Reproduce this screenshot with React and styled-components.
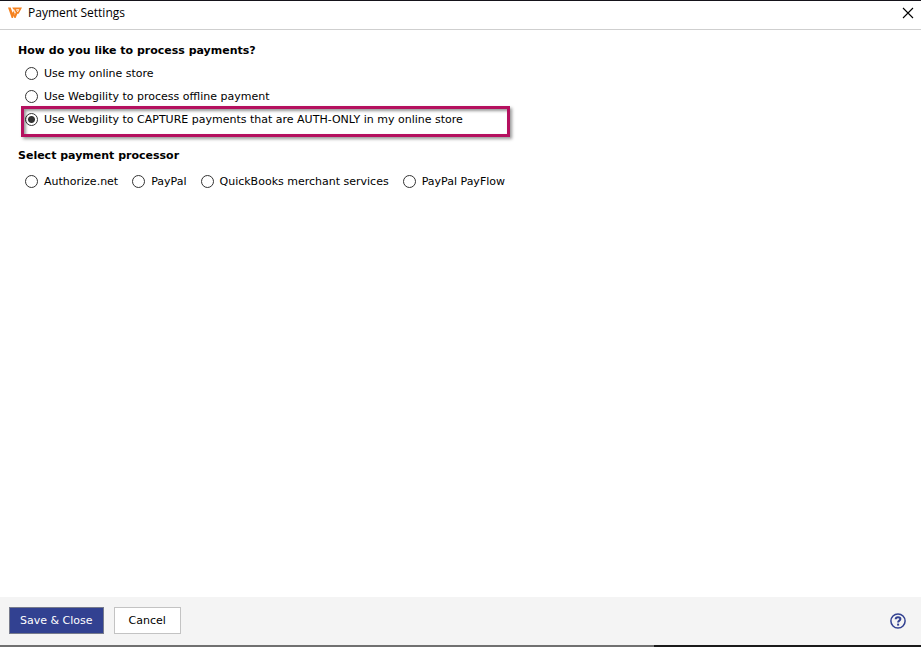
import React, { useState } from 'react'
import styled, { createGlobalStyle } from 'styled-components'

const GlobalStyle = createGlobalStyle`
* {
  box-sizing: border-box;
}
body {
  margin: 0;
  background-color: #fff;
}
`

const Window = styled.div`
  display: flex;
  flex-direction: column;
  min-height: 100vh;
  padding-bottom: 5px;
  border-top: 1px solid #15131a;
  background-color: #fff;
  color: #000;
  font-family: Verdana, 'DejaVu Sans', sans-serif;
  font-size: 11px;
  line-height: 15px;
`

const TitleBar = styled.header`
  display: flex;
  align-items: center;
  height: 29px;
  padding: 0 7px 4px 8px;
  border-bottom: 1px solid #cfcfcf;
`

const Title = styled.h1`
  flex: 1;
  margin: 0 0 0 6px;
  font-family: 'Segoe UI', 'Open Sans', sans-serif;
  font-size: 12px;
  font-weight: 400;
  line-height: 18px;
`

const IconButton = styled.button`
  display: flex;
  padding: 0;
  border: none;
  background-color: transparent;
  color: ${(props) => props.$color || '#000'};
`

const Content = styled.main`
  flex: 1;
  padding: 13px 18px;
`

const Group = styled.fieldset`
  min-width: 0;
  margin: 0 0 17px;
  padding: 0;
  border: none;
`

const Legend = styled.legend`
  padding: 0;
  font-weight: 700;
`

const Options = styled.div`
  display: flex;
  flex-direction: ${(props) => (props.$inline ? 'row' : 'column')};
  flex-wrap: ${(props) => (props.$inline ? 'wrap' : 'nowrap')};
  align-items: flex-start;
  column-gap: 14px;
  padding: ${(props) => (props.$inline ? '7px 0 0 7px' : '4px 0 0 3px')};
`

const Option = styled.label`
  display: flex;
  align-items: center;
  gap: 6px;
  height: 23px;
  padding-left: ${(props) => (props.$inline ? '0' : '4px')};
`

/* the frame is drawn over the row, so it takes no room in the list */
const HighlightedOption = styled(Option)`
  position: relative;
  width: 489px;
  max-width: 100%;

  &::after {
    content: '';
    position: absolute;
    inset: -2px 0 -6px;
    border: 3px solid #b5105f;
    box-shadow: 2px 2px 3px rgba(0, 0, 0, 0.4), inset 2px 2px 3px rgba(0, 0, 0, 0.4);
    pointer-events: none;
  }
`

const Radio = styled.input`
  appearance: none;
  flex: none;
  width: 13px;
  height: 13px;
  margin: 0;
  border: 1px solid #333;
  border-radius: 50%;
  background-color: #fff;

  &:checked {
    background-image: radial-gradient(circle, #333 3px, transparent 4px);
  }
`

const Footer = styled.footer`
  display: flex;
  align-items: center;
  gap: 10px;
  height: 48px;
  padding: 0 15px 2px 9px;
  background-color: #f4f4f4;
`

const Button = styled.button`
  height: 27px;
  padding: 0 ${(props) => (props.$primary ? '10px' : '14px')};
  border: 1px solid ${(props) => (props.$primary ? '#777b8c' : '#c3c3c3')};
  background-color: ${(props) => (props.$primary ? '#324191' : '#fff')};
  color: ${(props) => (props.$primary ? '#fff' : '#000')};
  font-family: inherit;
  font-size: 11px;
  line-height: 15px;
`

const Spacer = styled.div`
  flex: 1;
`

const HelpButton = styled(IconButton)`
  padding-top: 2px;
`

const BottomEdge = styled.div`
  height: 2px;
  background: linear-gradient(to right, #707070 71%, #1a1a1a 71%);
`

const Logo = () => (
  <svg width="14" height="12" viewBox="0 0 14 12" fill="none" aria-hidden="true">
    <path d="M0 .6h2.7l1.9 5.2 1-1.8 1.2 2.6L4.9 11H3.7z" fill="#f58220" />
    <path d="M4.2.6H14l-3.4 6.2H9.4L7.6 11H6.4L5.6 8.4l1.8-2.2z" fill="#f58220" />
    <path d="M5.6 2.2l2 4M8.4 2.6h2.4L9.6 4.8z" stroke="#fff" strokeWidth="0.8" />
  </svg>
)

const CloseIcon = () => (
  <svg width="12" height="12" viewBox="0 0 12 12" aria-hidden="true">
    <path d="M1 1l10 10M11 1L1 11" stroke="currentColor" strokeWidth="1.1" />
  </svg>
)

const HelpIcon = () => (
  <svg width="16" height="16" viewBox="0 0 16 16" fill="none" stroke="currentColor" aria-hidden="true">
    <circle cx="8" cy="8" r="7.1" strokeWidth="1.5" />
    <path d="M5.7 6.3C5.7 4.9 6.6 4.3 8 4.3s2.4.7 2.4 1.8c0 1.5-2.3 1.5-2.3 3.4" strokeWidth="2" />
    <path d="M7.1 11.6H9.1" strokeWidth="2" />
  </svg>
)

const methods = [
  { id: 'store', label: 'Use my online store' },
  { id: 'offline', label: 'Use Webgility to process offline payment' },
  {
    id: 'capture',
    label: 'Use Webgility to CAPTURE payments that are AUTH-ONLY in my online store',
    highlighted: true,
  },
]

const processors = ['Authorize.net', 'PayPal', 'QuickBooks merchant services', 'PayPal PayFlow']

const App = () => {
  const [method, setMethod] = useState('capture')
  const [processor, setProcessor] = useState('')

  return (
    <>
      <GlobalStyle />
      <Window>
        <TitleBar>
          <Logo />
          <Title>Payment Settings</Title>
          <IconButton type="button" aria-label="Close">
            <CloseIcon />
          </IconButton>
        </TitleBar>
        <Content>
          <Group>
            <Legend>How do you like to process payments?</Legend>
            <Options>
              {methods.map(({ id, label, highlighted }) => {
                const Row = highlighted ? HighlightedOption : Option
                return (
                  <Row key={id}>
                    <Radio
                      type="radio"
                      name="method"
                      checked={method === id}
                      onChange={() => setMethod(id)}
                    />
                    {label}
                  </Row>
                )
              })}
            </Options>
          </Group>
          <Group>
            <Legend>Select payment processor</Legend>
            <Options $inline>
              {processors.map((name) => (
                <Option key={name} $inline>
                  <Radio
                    type="radio"
                    name="processor"
                    checked={processor === name}
                    onChange={() => setProcessor(name)}
                  />
                  {name}
                </Option>
              ))}
            </Options>
          </Group>
        </Content>
        <Footer>
          <Button type="button" $primary>Save &amp; Close</Button>
          <Button type="button">Cancel</Button>
          <Spacer />
          <HelpButton type="button" aria-label="Help" $color="#324191">
            <HelpIcon />
          </HelpButton>
        </Footer>
        <BottomEdge />
      </Window>
    </>
  )
}

export default App
